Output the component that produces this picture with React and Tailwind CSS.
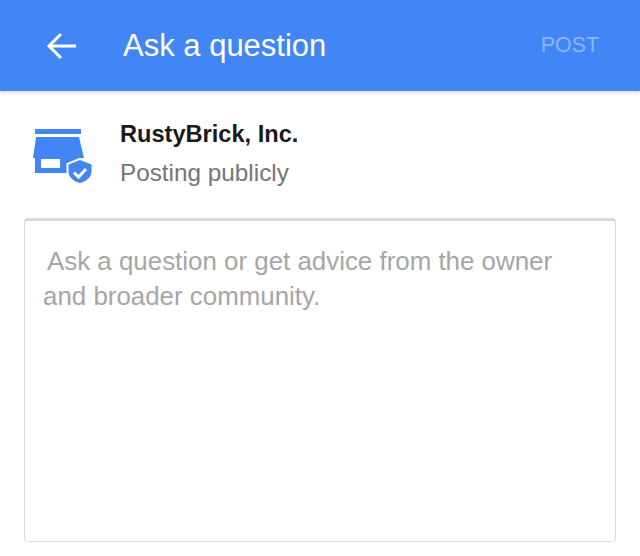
export default function App() {
  return (
    <div className="w-[640px] h-[556px] bg-white overflow-hidden font-['Liberation_Sans',Arial,sans-serif]">
      <header className="h-[91px] bg-[#4285f4] flex items-center pl-[46px] pr-[41px] shadow-[0_2px_3px_rgba(0,0,0,0.14)]">
        <svg width="31" height="28" viewBox="0 0 31 28" fill="none" stroke="white" strokeWidth="3" className="shrink-0">
          <path d="M30 14H3M15 2 3 14l12 12" />
        </svg>
        <h1 className="ml-[46px] text-[31px] leading-none text-white font-normal">Ask a question</h1>
        <span className="ml-auto text-[21.4px] leading-none text-[#8db5f8]">POST</span>
      </header>
      <section className="flex pl-[32px] pt-[29px]">
        <svg width="61" height="56" viewBox="0 0 61 56" className="shrink-0 mt-[9px]">
          <path fill="#4285f4" d="M3 0h46v5H3zM4 8h43l5 21H1z" />
          <path fill="#4285f4" d="M3 29h46v15H3z" />
          <path fill="white" d="M9 30h19v9H9z" />
          <path fill="#4285f4" stroke="white" strokeWidth="4" paintOrder="stroke" d="M48 31l11.500 4.500v6.500c0 6-4.500 10-11.500 12-7-2-11.500-6-11.500-12v-6.500z" />
          <path fill="none" stroke="white" strokeWidth="3" d="M42 43.500l4.500 4.500 7.500-8" />
        </svg>
        <div className="ml-[27px] flex flex-col pt-[1px]">
          <div className="text-[23.6px] leading-[26px] font-bold text-[#1a1a1a]">RustyBrick, Inc.</div>
          <div className="mt-[12px] text-[24.3px] leading-[27px] text-[#757575]">Posting publicly</div>
        </div>
      </section>
      <div className="mt-[32px] mx-[24px] h-[324px] rounded-[4px] border border-[#dcdcdc] border-t-[3px] border-t-[#d8d8d8] pl-[18px] pr-[40px] pt-[23px] text-[25.9px] leading-[34.5px] text-[#a6a6a6]">
        <div className="indent-[4px]">Ask a question or get advice from the owner and broader community.</div>
      </div>
    </div>
  );
}
